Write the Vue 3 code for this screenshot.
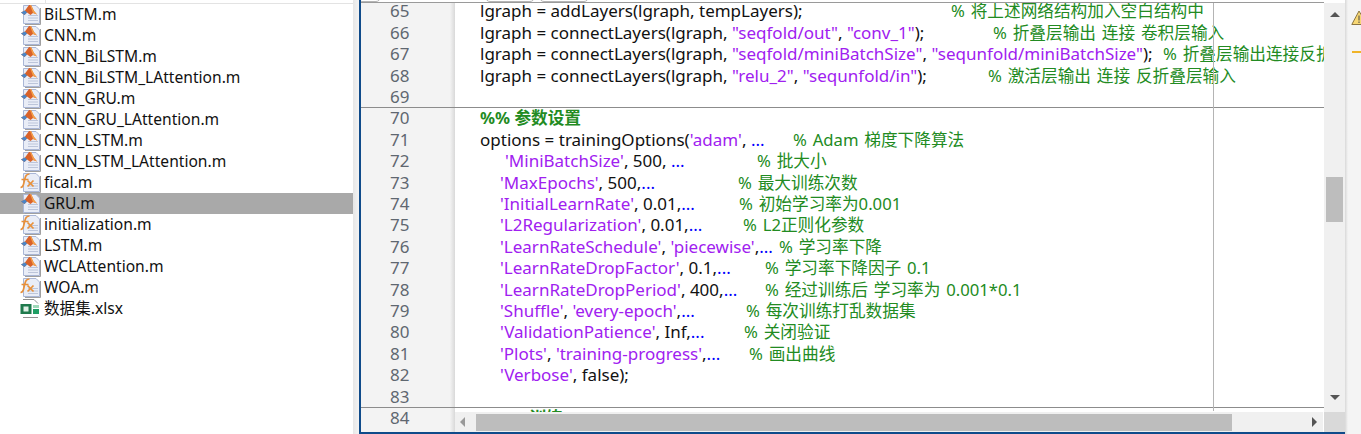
<script setup>
const files = [
  ['BiLSTM.m', 'm'], ['CNN.m', 'm'], ['CNN_BiLSTM.m', 'm'], ['CNN_BiLSTM_LAttention.m', 'm'],
  ['CNN_GRU.m', 'm'], ['CNN_GRU_LAttention.m', 'm'], ['CNN_LSTM.m', 'm'], ['CNN_LSTM_LAttention.m', 'm'],
  ['fical.m', 'f'], ['GRU.m', 'm'], ['initialization.m', 'f'], ['LSTM.m', 'm'],
  ['WCLAttention.m', 'm'], ['WOA.m', 'f'], ['数据集.xlsx', 'x']
]
const S = s => ({ t: s, c: 'str' })
const T = s => ({ t: s, c: '' })
const D = { t: '...', c: 'dots' }
const lines = [
  { n: 65, x: 480, parts: [T('lgraph = addLayers(lgraph, tempLayers);')], cx: 951, cm: '% 将上述网络结构加入空白结构中' },
  { n: 66, x: 480, parts: [T('lgraph = connectLayers(lgraph, '), S('"seqfold/out"'), T(', '), S('"conv_1"'), T(');')], cx: 993, cm: '% 折叠层输出 连接 卷积层输入' },
  { n: 67, x: 480, parts: [T('lgraph = connectLayers(lgraph, '), S('"seqfold/miniBatchSize"'), T(', '), S('"sequnfold/miniBatchSize"'), T(');')], cx: 1163, cm: '% 折叠层输出连接反折叠层输入' },
  { n: 68, x: 480, parts: [T('lgraph = connectLayers(lgraph, '), S('"relu_2"'), T(', '), S('"sequnfold/in"'), T(');')], cx: 988, cm: '% 激活层输出 连接 反折叠层输入' },
  { n: 69, x: 480, parts: [] },
  { n: 70, x: 480, parts: [{ t: '%% 参数设置', c: 'head' }], sec: true },
  { n: 71, x: 480, parts: [T('options = trainingOptions('), S("'adam'"), T(', '), D], cx: 793, cm: '% Adam 梯度下降算法' },
  { n: 72, x: 505, parts: [S("'MiniBatchSize'"), T(', 500, '), D], cx: 757, cm: '% 批大小' },
  { n: 73, x: 500, parts: [S("'MaxEpochs'"), T(', 500,'), D], cx: 738, cm: '% 最大训练次数' },
  { n: 74, x: 500, parts: [S("'InitialLearnRate'"), T(', 0.01,'), D], cx: 739, cm: '% 初始学习率为0.001' },
  { n: 75, x: 500, parts: [S("'L2Regularization'"), T(', 0.01,'), D], cx: 743, cm: '% L2正则化参数' },
  { n: 76, x: 500, parts: [S("'LearnRateSchedule'"), T(', '), S("'piecewise'"), T(','), D], cx: 779, cm: '% 学习率下降' },
  { n: 77, x: 500, parts: [S("'LearnRateDropFactor'"), T(', 0.1,'), D], cx: 765, cm: '% 学习率下降因子 0.1' },
  { n: 78, x: 500, parts: [S("'LearnRateDropPeriod'"), T(', 400,'), D], cx: 765, cm: '% 经过训练后 学习率为 0.001*0.1' },
  { n: 79, x: 500, parts: [S("'Shuffle'"), T(', '), S("'every-epoch'"), T(','), D], cx: 746, cm: '% 每次训练打乱数据集' },
  { n: 80, x: 500, parts: [S("'ValidationPatience'"), T(', Inf,'), D], cx: 744, cm: '% 关闭验证' },
  { n: 81, x: 500, parts: [S("'Plots'"), T(', '), S("'training-progress'"), T(','), D], cx: 749, cm: '% 画出曲线' },
  { n: 82, x: 500, parts: [S("'Verbose'"), T(', false);')] },
  { n: 83, x: 500, parts: [] },
  { n: 84, x: 480, parts: [{ t: '%%% 训练', c: 'head' }], sec: true }
]
const CODE_LEFT = 455
const indent = l => ({ paddingLeft: (l.x - CODE_LEFT) + 'px' })
const codeWidth = l => ({ width: (l.cx - l.x) + 'px' })
</script>

<template>
  <div class="page">
    <aside class="sidebar">
      <div class="side-head"><span class="side-sep"></span></div>
      <div v-for="f in files" :key="f[0]" class="file" :class="{ sel: f[0] === 'GRU.m' }">
        <svg class="ficon" width="21" height="21" viewBox="0 0 21 21">
          <template v-if="f[1] === 'x'">
            <path d="M3 1.5h11l4 4M3 19.5h15" fill="none" stroke="#8f8f8f" stroke-width="1" />
            <rect x="0.5" y="6" width="11" height="10" fill="#1f7a4d" />
            <rect x="3.5" y="8.5" width="5" height="5" fill="#dff0e6" />
            <rect x="13" y="7" width="6" height="3" fill="#9fd8b8" />
            <rect x="13" y="11" width="6" height="5" fill="#1f9e64" />
          </template>
          <template v-else>
            <path d="M3.5 1.5H16L19.5 5V19.5H3.5Z" fill="#e9edf7" stroke="#a9b6d6" />
            <path d="M20.5 4V20.5H5" fill="none" stroke="#a0a0a0" />
            <path d="M8 11.5h10M8 14h10M8 16.5h10" stroke="#bcc5da" />
            <template v-if="f[1] === 'm'">
              <path d="M1 8.5 L5 6.5 L9 1 L11 1 L14 7 L17 10.5 L13 9 L10.5 11 L7 8.5 L4.5 11Z" fill="#d9622a" />
              <path d="M1 8.5 L5 6.5 L7 8.5 L4.5 11Z" fill="#4a86c8" />
              <path d="M10 1 L11 1 L14 7 L17 10.5 L13 9Z" fill="#f3a04a" />
            </template>
            <template v-else>
              <path d="M0.5 15.5C4 15.5 3.5 11.5 4.5 8S6 2 9.5 2M1.5 7.5H8.5" fill="none" stroke="#e8903a" stroke-width="1.7" />
              <path d="M7.5 8.5L13.5 14.5M13.5 8.5L7.5 14.5" stroke="#e8903a" stroke-width="1.7" />
            </template>
          </template>
        </svg>
        <span class="fname">{{ f[0] }}</span>
      </div>
    </aside>

    <div class="gap"></div>

    <main class="editor">
      <div class="tabs">
        <span class="tab t1"></span>
        <span class="tab t2"></span>
        <span class="tab t3"></span>
      </div>
      <div class="code">
        <div v-for="l in lines" :key="l.n" class="row" :class="{ sec: l.sec }">
          <div class="num">{{ l.n }}</div>
          <div class="text" :style="indent(l)">
            <span v-if="l.cm" class="lead" :style="codeWidth(l)"><span v-for="(p, i) in l.parts" :key="i" :class="p.c">{{ p.t }}</span></span>
            <template v-else><span v-for="(p, i) in l.parts" :key="i" :class="p.c">{{ p.t }}</span></template>
            <span v-if="l.cm" class="cm">{{ l.cm }}</span>
          </div>
        </div>
        <div class="guide"></div>
      </div>
      <div class="vbar">
        <span class="arrow up"></span>
        <span class="vthumb"></span>
        <span class="arrow down"></span>
      </div>
      <div class="hbar">
        <span class="arrow left"></span>
        <span class="hthumb"></span>
        <span class="arrow right"></span>
      </div>
      <div class="corner"></div>
    </main>

    <div class="rail">
      <svg class="warn" width="10" height="16" viewBox="0 0 10 16">
        <path d="M8 1L0.8 14.5H16Z" fill="#f7d774" stroke="#8a7440" />
        <path d="M8 5.5V10.5M8 11.5V13" stroke="#444" />
      </svg>
      <span class="dash"></span>
    </div>
  </div>
</template>

<style>
html, body { margin: 0; padding: 0; background: #fff; }
</style>

<style scoped>
.page {
  display: flex;
  width: 1361px;
  height: 434px;
  overflow: hidden;
  background: #fff;
  font-family: "Noto Sans", "Noto Sans CJK SC", sans-serif;
  color: #111;
}
.sidebar {
  width: 353px;
  flex: none;
  background: #fff;
}
.side-head {
  height: 3px;
  border-bottom: 1px solid #e3e3e3;
  position: relative;
}
.side-sep {
  position: absolute;
  left: 45px;
  top: 0;
  width: 1px;
  height: 3px;
  background: #e3e3e3;
}
.file {
  height: 21px;
  display: flex;
  align-items: center;
  padding-left: 20px;
  font-size: 15.6px;
  line-height: 20px;
  white-space: nowrap;
}
.file.sel { background: #a9a9a9; }
.ficon { flex: none; }
.fname { margin-left: 3px; margin-bottom: 2px; }
.gap {
  width: 6px;
  flex: none;
  background: linear-gradient(to right, #e6e6e6, #f4f4f4);
}
.editor {
  position: relative;
  width: 986px;
  height: 434px;
  flex: none;
  box-sizing: border-box;
  border-left: 2px solid #0f4b8a;
  border-bottom: 2px solid #0f4b8a;
  overflow: hidden;
}
.tabs {
  position: absolute;
  z-index: 3;
  left: 0;
  right: 21px;
  top: 0;
  height: 3px;
  box-sizing: border-box;
  background: #fff;
  border-bottom: 1px solid #9a9a9a;
}
.tab {
  position: absolute;
  top: -8px;
  height: 10px;
  background: #fff;
  border: 1px solid #b5b5b5;
  border-radius: 0 0 5px 5px;
  box-sizing: border-box;
}
.t1 { left: -4px; width: 24px; }
.t2 { left: 124px; width: 50px; }
.t3 { left: 178px; width: 50px; }
.code {
  position: relative;
  padding-top: 0.3px;
  height: 432px;
  box-sizing: border-box;
  background: linear-gradient(to right, #f3f3f3 89px, #d9d9d9 94px, #fff 94px);
}
.row {
  display: flex;
  height: 21.42px;
  box-sizing: border-box;
  line-height: 21.42px;
  font-size: 17px;
  white-space: pre;
}
.row.sec { box-shadow: inset 0 1px 0 #8c8c8c; }
.num {
  width: 94px;
  flex: none;
  box-sizing: border-box;
  padding-left: 29px;
  color: #5f6770;
}
.text {
  width: 869px;
  overflow: hidden;
  flex: none;
  box-sizing: border-box;
}
.lead { display: inline-block; }
.str { color: #a020f0; }
.dots { color: #0000ff; }
.cm { color: #228b22; font-size: 16.67px; word-spacing: 1.5px; }
.head { color: #228b22; font-weight: 700; font-size: 16.67px; }
.guide {
  position: absolute;
  left: 852px;
  top: 0;
  bottom: 21px;
  width: 1px;
  background: #b4b4b4;
}
.vbar {
  position: absolute;
  z-index: 2;
  left: 963px;
  top: 3px;
  width: 21px;
  height: 409px;
  background: #f0f0f0;
}
.vthumb {
  position: absolute;
  left: 2px;
  top: 174px;
  width: 17px;
  height: 45px;
  background: #bdbdbd;
}
.hbar {
  position: absolute;
  z-index: 2;
  left: 94px;
  right: 22px;
  top: 412px;
  height: 20px;
  background: #f0f0f0;
}
.hthumb {
  position: absolute;
  left: 21px;
  top: 2px;
  width: 756px;
  height: 17px;
  background: #bdbdbd;
}
.corner {
  position: absolute;
  z-index: 2;
  left: 963px;
  top: 412px;
  width: 21px;
  height: 20px;
  background: #d9d9d9;
}
.arrow { position: absolute; width: 0; height: 0; border-style: solid; border-color: transparent; }
.up { left: 6px; top: 9px; border-width: 0 5px 5px; border-bottom-color: #555; }
.down { left: 6px; top: 392px; border-width: 5px 5px 0; border-top-color: #555; }
.left { left: 5px; top: 5px; border-width: 5px 5px 5px 0; border-right-color: #999; }
.right { right: 6px; top: 5px; border-width: 5px 0 5px 5px; border-left-color: #555; }
.rail {
  position: relative;
  flex: 1;
  background: linear-gradient(to right, #d8d8d8, #f4f4f4 3px);
}
.warn { position: absolute; left: 6px; top: 10px; }
.dash { position: absolute; left: 7px; top: 51px; right: 0; height: 2px; background: #f0b428; }
</style>
